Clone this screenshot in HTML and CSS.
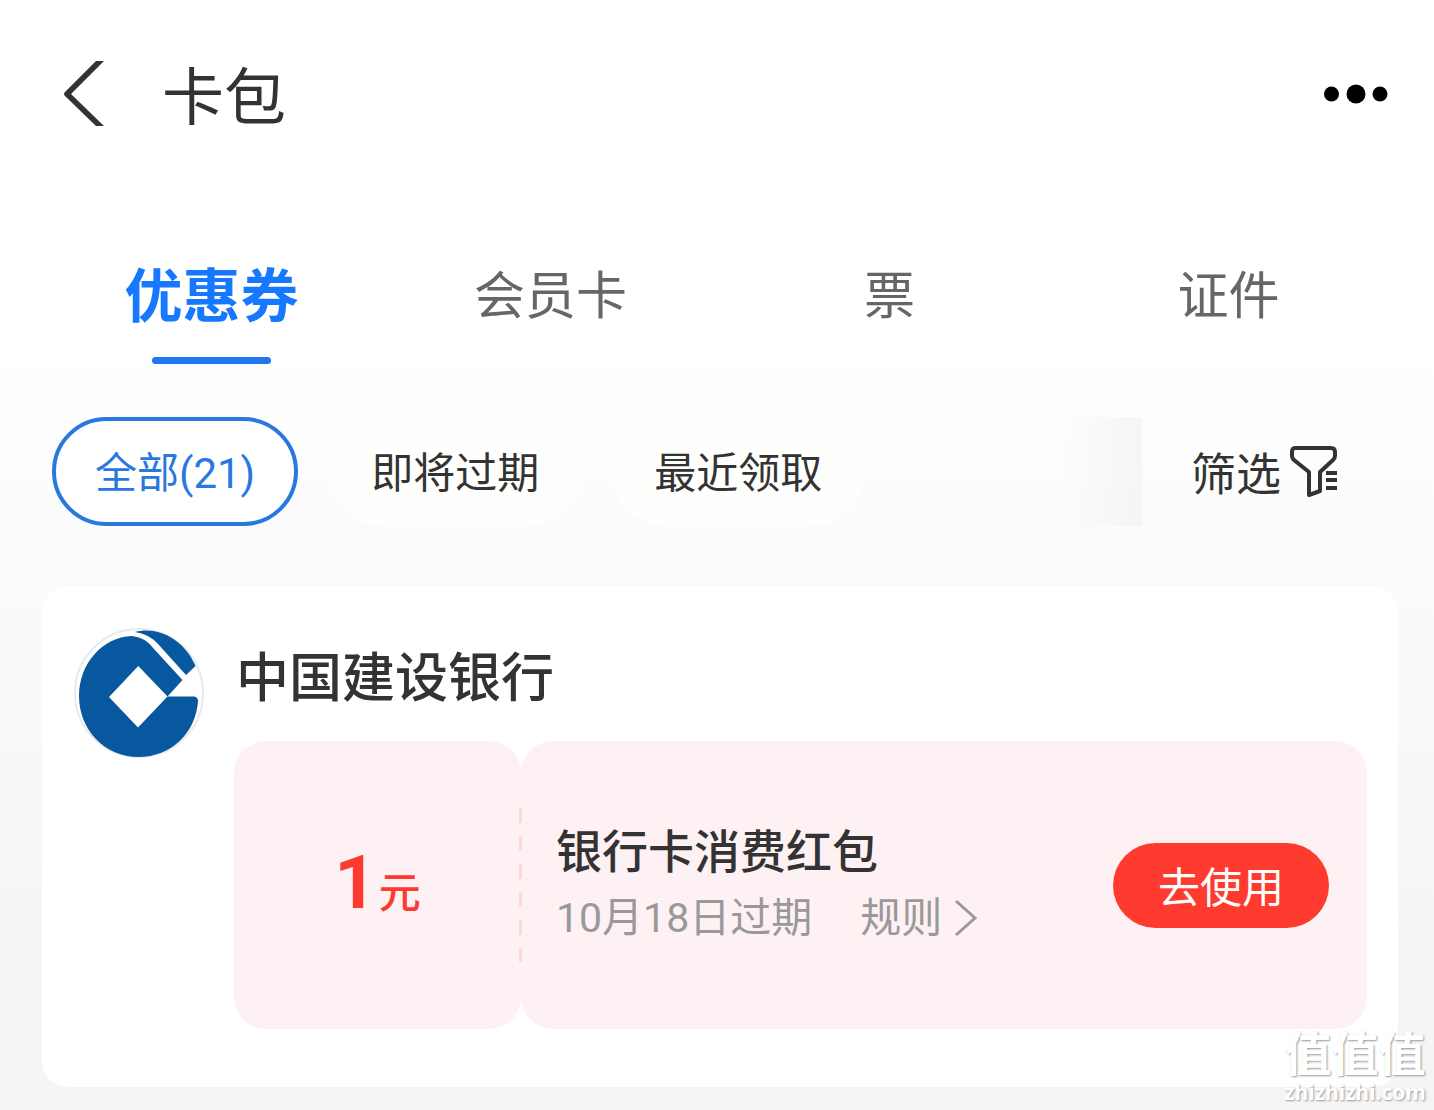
FILE: index.html
```html
<!DOCTYPE html>
<html lang="zh-CN">
<head>
<meta charset="utf-8">
<meta name="viewport" content="width=device-width, initial-scale=1">
<title>卡包</title>
<link rel="stylesheet" href="styles.css">
</head>
<body>
<header class="topbar">
  <button class="icon-button" type="button" aria-label="返回">
    <svg width="42" height="66" viewBox="0 0 42 66"><path d="M34 0h8L9 33l33 32h-8L3 35q-2-2 0-4z" fill="#333"/></svg>
  </button>
  <h1 class="topbar-title">卡包</h1>
  <button class="icon-button" type="button" aria-label="更多">
    <svg width="66" height="20" viewBox="0 0 66 20"><circle cx="8.500" cy="10" r="7.500"/><circle cx="33" cy="10" r="9.500"/><circle cx="57" cy="10" r="7.500"/></svg>
  </button>
</header>

<nav class="tabs" aria-label="卡包分类">
  <a class="tab tab-active" href="#coupons" aria-current="page">优惠券</a>
  <a class="tab" href="#members">会员卡</a>
  <a class="tab" href="#tickets">票</a>
  <a class="tab" href="#ids">证件</a>
</nav>

<main id="coupons">
  <div class="filters">
    <div class="chips">
      <button class="chip chip-active" type="button">全部(21)</button>
      <button class="chip" type="button">即将过期</button>
      <button class="chip" type="button">最近领取</button>
      <span class="chips-fade"></span>
    </div>
    <button class="filter-button" type="button">筛选
      <svg width="50" height="54" viewBox="0 0 50 54" fill="none" stroke="#333" stroke-width="4" stroke-linejoin="round"><path d="M6 3h36q4 0 4 4v4q0 2-2 4L31 27v19l-11 4V27L5 15q-2-2-2-4V7q0-4 3-4z"/><path d="M37 28h11M37 35h11M37 43h11"/></svg>
    </button>
  </div>

  <section class="card">
    <svg class="bank-logo" viewBox="0 0 130 130" role="img" aria-label="中国建设银行">
      <circle cx="65" cy="65" r="64" fill="#fff" stroke="#e8eaed" stroke-width="2"/>
      <path fill="#08589f" fill-rule="evenodd" d="M58 8C28 9 5 36 5 68c0 34 26 61 59.500 61C97 129 122 105 124 73q0-4-4-4.500H93.500L108.500 52 80 21Q71 9 58 8zM64.300 38l29.200 30.500-29.500 31-29-30.500z"/>
      <path fill="#08589f" d="M61 4C82-2 110 10 121.500 38l-9.500 9-28-31Q75 6 61 4z"/>
    </svg>
    <div class="card-body">
      <h2 class="bank-name">中国建设银行</h2>
      <article class="coupon">
        <p class="coupon-amount"><strong class="amount-value">1</strong>元</p>
        <div class="coupon-detail">
          <div class="coupon-info">
            <h3 class="coupon-title">银行卡消费红包</h3>
            <p class="coupon-meta">
              <span>10月18日过期</span>
              <a class="rules" href="#rules">规则<svg width="24" height="38" viewBox="0 0 24 38" fill="none" stroke="#999" stroke-width="3"><path d="M2 2l19 17L2 36"/></svg></a>
            </p>
          </div>
          <button class="use-button" type="button">去使用</button>
        </div>
      </article>
    </div>
  </section>
</main>

<div class="watermark"><span class="watermark-name">值值值</span><span class="watermark-site">zhizhizhi.com</span></div>
</body>
</html>
```

FILE: styles.css
```css
* {
  box-sizing: border-box;
}

body {
  position: relative;
  margin: 0;
  min-height: 100vh;
  padding-bottom: 23px;
  color: #333;
  font-family: Roboto, "Noto Sans CJK SC", sans-serif;
  background: linear-gradient(#fff 30%, #fbfbfb 50%, #f5f5f5 85%);
}

h1, h2, h3, p {
  margin: 0;
}

button {
  border: 0;
  padding: 0;
  color: inherit;
  font: inherit;
  background: none;
}

a {
  color: inherit;
  text-decoration: none;
}

svg {
  display: block;
  flex: none;
}

.topbar {
  display: flex;
  align-items: center;
  padding: 48px 45px 48px 62px;
}

.topbar-title {
  flex: 1;
  margin-left: 58px;
  padding-top: 10px;
  font-size: 62px;
  font-weight: 400;
  line-height: 82px;
}

.tabs {
  display: grid;
  grid-template-columns: repeat(4, 1fr);
  height: 176px;
  padding: 60px 36px 0 42px;
  color: #666;
  font-size: 51px;
  line-height: 98px;
  text-align: center;
}

.tab-active {
  color: #1677ff;
  font-size: 58px;
  font-weight: 700;
}

.tab-active::after {
  content: "";
  display: block;
  width: 119px;
  height: 7px;
  margin: 11px auto 0;
  border-radius: 4px;
  background: #1f78f0;
}

.filters {
  display: flex;
  margin-top: 53px;
  padding: 0 95px 0 52px;
}

.chips {
  display: flex;
  flex: 1;
  gap: 31px;
}

.chip {
  height: 109px;
  padding: 0 42px 4px;
  border-radius: 55px;
  font-size: 42px;
  background: #fefefd;
}

.chip-active {
  padding: 0 39px 4px;
  border: 4px solid #2878e0;
  color: #2878e0;
  background: #fff;
}

.chips-fade {
  width: 81px;
  margin-left: auto;
  background: linear-gradient(90deg, transparent, #f5f5f5);
}

.filter-button {
  display: flex;
  align-items: center;
  gap: 8px;
  margin-left: 49px;
  font-size: 45px;
}

.card {
  display: flex;
  align-items: flex-start;
  gap: 30px;
  margin: 60px 36px 0 42px;
  padding: 42px 31px 58px 32px;
  border-radius: 26px;
  background: #fff;
}

.bank-logo {
  width: 130px;
  height: 130px;
}

.card-body {
  flex: 1;
}

.bank-name {
  padding: 0 0 11px 2px;
  font-size: 53px;
  font-weight: 500;
  line-height: 102px;
}

.coupon {
  display: flex;
  min-height: 288px;
}

.coupon-amount {
  display: flex;
  align-items: baseline;
  justify-content: center;
  gap: 2px;
  width: 287px;
  padding-top: 92px;
  border-radius: 32px;
  color: #fb3b30;
  font-size: 42px;
  font-weight: 500;
  background: #fef1f3;
}

.amount-value {
  font-size: 74px;
  font-weight: 700;
  line-height: 100px;
}

.coupon-detail {
  position: relative;
  display: flex;
  flex: 1;
  align-items: center;
  justify-content: space-between;
  padding: 0 38px 0 35px;
  border-radius: 32px;
  background: #fef1f3;
}

/* perforation over the seam of the two halves */
.coupon-detail::before {
  content: "";
  position: absolute;
  top: 67px;
  bottom: 67px;
  left: -2px;
  width: 3px;
  background: repeating-linear-gradient(#fdd9de 0 15px, #fef1f3 15px 28px);
}

.coupon-title {
  font-size: 46px;
  font-weight: 500;
  line-height: 66px;
}

.coupon-meta {
  display: flex;
  gap: 48px;
  color: #999;
  font-size: 41px;
  line-height: 66px;
}

.rules {
  display: flex;
  align-items: center;
  gap: 12px;
}

.use-button {
  height: 85px;
  padding: 0 45px 2px;
  border-radius: 43px;
  color: #fff;
  font-size: 42px;
  background: #ff3b30;
}

.watermark {
  position: absolute;
  right: 8px;
  bottom: 6px;
  display: flex;
  flex-direction: column;
  align-items: center;
  color: #fff;
  font-weight: 700;
  text-shadow: 1px 1px 2px #999;
}

.watermark-name {
  font-size: 47px;
  line-height: 50px;
}

.watermark-site {
  font-family: "Open Sans", sans-serif;
  font-size: 21px;
  line-height: 24px;
}
```
